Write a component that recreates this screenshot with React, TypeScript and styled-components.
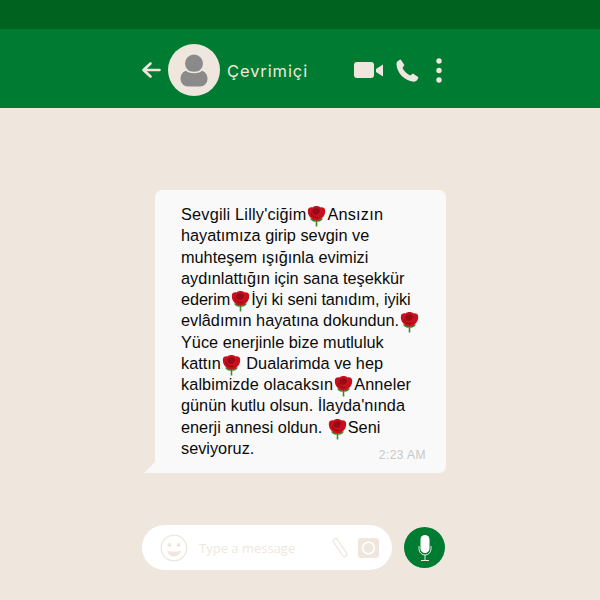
import React from "react";
import styled, { createGlobalStyle } from "styled-components";

const Global = createGlobalStyle`
  html, body { margin: 0; padding: 0; }
  body { width: 600px; height: 600px; overflow: hidden; background: #efe7de; }
`;
const Page = styled.div`
  width: 600px; height: 600px; display: flex; flex-direction: column; background: #efe7de;
  font-family: "Liberation Sans", Arial, sans-serif;
`;
const StatusBar = styled.div`height: 29px; background: #00621f;`;
const Header = styled.header`
  height: 79px; background: #007c32; display: flex; align-items: center; padding: 3px 0 0 141px; box-sizing: border-box;
`;
const Avatar = styled.div`
  width: 52px; height: 52px; border-radius: 50%; background: #efe7de; margin-left: 7px; display: flex; align-items: center; justify-content: center;
`;
const Status = styled.span`
  font-family: Inter, sans-serif; font-size: 16.5px; letter-spacing: .9px; color: #efe7de; margin: 1px 0 0 7px; width: 127px;
`;
const Actions = styled.div`display: flex; align-items: center;`;
const Body = styled.main`flex: 1; display: flex; flex-direction: column; align-items: flex-start; padding: 82px 0 0 144px;`;
const Bubble = styled.div`
  position: relative; width: 291px; height: 283px; margin-left: 11px; box-sizing: border-box; background: #f9f9f9; border-radius: 7px; border-bottom-left-radius: 0; padding: 14px 0 0 26px;
  &::before { content: ""; position: absolute; left: -11px; bottom: 0; width: 0; height: 0; border-style: solid; border-width: 0 0 11px 11px; border-color: transparent transparent #f9f9f9 transparent; }
`;
const Message = styled.div`
  font-size: 16.3px; color: #0a0a0a; white-space: nowrap;
`;
const Line = styled.div<{ $track?: number }>`
  height: 21.27px; line-height: 21.27px; letter-spacing: ${(p) => p.$track ?? 0}px;
`;
const Time = styled.span`
  position: absolute; right: 20px; bottom: 11px; font-size: 12px; letter-spacing: .45px; color: #c8c8c8;
`;
const Composer = styled.div`display: flex; align-items: center; margin-top: 52px; margin-left: -2px;`;
const InputBar = styled.div`
  width: 250px; height: 45px; border-radius: 23px; background: #fff; display: flex; align-items: center; padding-left: 18px; box-sizing: border-box;
`;
const Placeholder = styled.span`
  font-family: "Open Sans", sans-serif; font-size: 13px; color: #efe7de; margin-left: 11px; width: 132px;
`;
const MicButton = styled.div`
  width: 41px; height: 41px; border-radius: 50%; background: #007c32; margin-left: 12px; display: flex; align-items: center; justify-content: center;
`;
const RoseIcon = styled.svg`width: 21px; height: 21px; vertical-align: -2px; margin-block: -5px;`;

const Rose = () => (
  <RoseIcon viewBox="0 0 21 21">
    <path d="M10.500 13 L10.500 20.500" stroke="#3c8a2e" strokeWidth="1.600" />
    <path d="M10.500 15.500C7.500 16 5 15 4 12.500 6.500 12.500 8.500 13 10.500 15.500ZM10.500 15.500C13.500 16 16 15 17 12.500 14.500 12.500 12.500 13 10.500 15.500Z" fill="#3c8a2e" />
    <path d="M2 3.500C2.500 2 4.500 1 6.500 1.500 8 -.5 13 -.5 14.500 1.500 16.500 1 18.500 2 19 3.500 20 9 16.500 13.500 10.500 15 4.500 13.500 1 9 2 3.500Z" fill="#c8101c" />
    <path d="M7 3.500C9 1.800 12.500 2 14 4 14 8 10.500 9.500 7.800 8.200 6.200 7 6 4.800 7 3.500Z" fill="#960b17" />
    <path d="M5 7C6 10.500 8.500 12 12.500 11.500" stroke="#840913" strokeWidth="1" fill="none" />
  </RoseIcon>
);

export default function App() {
  return (
    <Page>
      <Global />
      <StatusBar />
      <Header>
        <svg width="20" height="20" viewBox="0 0 20 20" fill="none" stroke="#efe7de" strokeWidth="2.600" strokeLinecap="round" strokeLinejoin="round">
          <path d="M18.500 10H3M9.500 3.500 2.500 10l7 6.500" />
        </svg>
        <Avatar>
          <svg width="30" height="33" viewBox="0 0 30 33">
            <circle cx="15" cy="9.500" r="9" fill="#8a8a8a" />
            <rect x="1.500" y="16.500" width="27" height="16" rx="7.500" fill="#8a8a8a" />
            <path d="M7 15.500c3 4 13 4 16 0" stroke="#efe7de" strokeWidth="1.400" fill="none" />
          </svg>
        </Avatar>
        <Status>Çevrimiçi</Status>
        <Actions>
          <svg width="30" height="17" viewBox="0 0 30 17">
            <rect x="0" y="0" width="20" height="16" rx="3" fill="#efe7de" />
            <path d="M22 7l7-4.500v12L22 10Z" fill="#efe7de" />
          </svg>
          <svg style={{ marginLeft: 11 }} width="25" height="25" viewBox="0 0 24 24">
            <path d="M5.500 1.500 9 6.800 7.200 9.500c1.500 3.200 4 5.600 7.400 7.200l2.600-1.800 5.300 3.600c-.6 2.600-2.400 4.400-4.600 4.200C9 21.900 2 14.500 1.400 6 1.300 3.800 3 2 5.500 1.500Z" fill="#efe7de" />
          </svg>
          <svg style={{ marginLeft: 16 }} width="6" height="25" viewBox="0 0 6 25">
            <circle cx="3" cy="3" r="2.700" fill="#efe7de" />
            <circle cx="3" cy="12.500" r="2.700" fill="#efe7de" />
            <circle cx="3" cy="22" r="2.700" fill="#efe7de" />
          </svg>
        </Actions>
      </Header>
      <Body>
        <Bubble>
          <Message>
            <Line $track={0.2}>Sevgili Lilly'ciğim<Rose />Ansızın</Line>
            <Line>hayatımıza girip sevgin ve</Line>
            <Line>muhteşem ışığınla evimizi</Line>
            <Line>aydınlattığın için sana teşekkür</Line>
            <Line $track={-0.1}>ederim<Rose />İyi ki seni tanıdım, iyiki</Line>
            <Line>evlâdımın hayatına dokundun.<Rose /></Line>
            <Line>Yüce enerjinle bize mutluluk</Line>
            <Line>kattın<Rose /> Dualarimda ve hep</Line>
            <Line $track={0.1}>kalbimizde olacaksın<Rose />Anneler</Line>
            <Line>günün kutlu olsun. İlayda'nında</Line>
            <Line>enerji annesi oldun. <Rose />Seni</Line>
            <Line>seviyoruz.</Line>
          </Message>
          <Time>2:23 AM</Time>
        </Bubble>
        <Composer>
          <InputBar>
            <svg width="28" height="28" viewBox="0 0 28 28" fill="none" stroke="#efe7de" strokeWidth="1.300">
              <circle cx="14" cy="14" r="12.800" />
              <circle cx="9.500" cy="11" r="2" fill="#efe7de" stroke="none" />
              <circle cx="18.500" cy="11" r="2" fill="#efe7de" stroke="none" />
              <path d="M7 16.500c3 1.500 11 1.500 14 0-1 4-4 6-7 6s-6-2-7-6Z" fill="#efe7de" stroke="none" />
            </svg>
            <Placeholder>Type a message</Placeholder>
            <svg width="17" height="22" viewBox="0 0 17 22" fill="none" stroke="#efe7de" strokeWidth="1.300">
              <path d="M2 4 11.500 18.500a2.400 2.400 0 0 0 4-2.700L6 2a2.500 2.500 0 0 0-4 2l7.500 11.500" />
            </svg>
            <svg style={{ marginLeft: 10 }} width="21" height="20" viewBox="0 0 21 20">
              <rect width="21" height="20" rx="3" fill="#efe7de" />
              <circle cx="10.500" cy="10" r="5.800" fill="none" stroke="#fff" strokeWidth="1.600" />
            </svg>
          </InputBar>
          <MicButton>
            <svg width="14" height="26" viewBox="0 0 14 26" fill="none" stroke="#efe7de" strokeWidth="1">
              <rect x="2.500" y="0" width="9" height="18" rx="4.500" fill="#fff" stroke="none" />
              <path d="M1 11v3a6 6 0 0 0 12 0v-3M7 20v5M3 25.500h8" />
            </svg>
          </MicButton>
        </Composer>
      </Body>
    </Page>
  );
}
